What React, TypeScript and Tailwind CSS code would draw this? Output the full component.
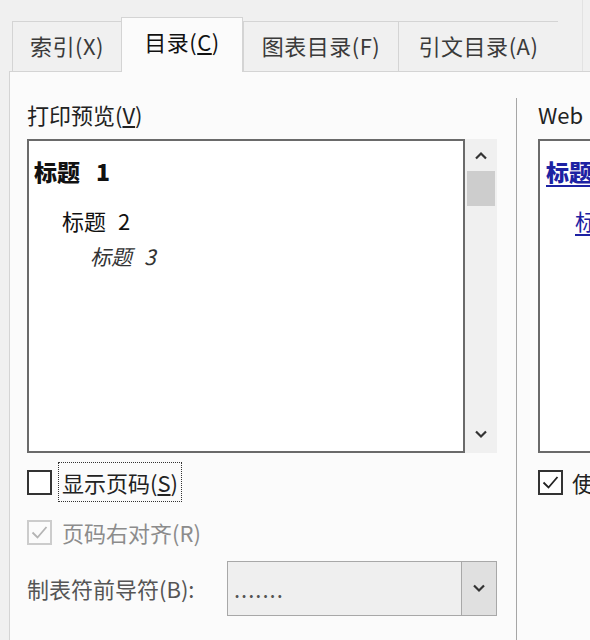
import React from 'react';

const Chevron = ({ up = false, className = '' }: { up?: boolean; className?: string }) => (
  <svg width="14" height="9" viewBox="0 0 14 9" className={className}>
    <polyline
      points={up ? '2,7.5 7,2.5 12,7.5' : '2,1.5 7,6.5 12,1.5'}
      fill="none"
      stroke="#333"
      strokeWidth="2.2"
    />
  </svg>
);

const Check = ({ color }: { color: string }) => (
  <svg width="21" height="21" viewBox="0 0 21 21">
    <polyline points="3.5,10.5 8.5,15.5 17.5,5" fill="none" stroke={color} strokeWidth="1.8" />
  </svg>
);

const tabs = [
  { label: '索引', key: 'X', w: 'w-[109px]' },
  { label: '目录', key: 'C', w: 'w-[122px]', active: true },
  { label: '图表目录', key: 'F', w: 'w-[155px]' },
  { label: '引文目录', key: 'A', w: 'w-[160px]' },
];

export default function App() {
  return (
    <div
      className="w-[590px] h-[640px] overflow-hidden bg-[#f0f0f0] flex flex-col text-[22px] text-[#222]"
      style={{ fontFamily: '"Noto Sans CJK SC", "Noto Sans", sans-serif' }}
    >
      {/* tab strip */}
      <div className="flex items-end pl-[12px] h-[71px] shrink-0">
        {tabs.map((t) =>
          t.active ? (
            <div
              key={t.key}
              className={`${t.w} h-[55px] -mb-px relative z-10 bg-[#fbfbfb] border-t border-x border-[#d4d4d4] flex items-center justify-center pb-[8px] text-[#111] tracking-[0.5px]`}
            >
              {t.label}(<span className="underline underline-offset-2">{t.key}</span>)
            </div>
          ) : (
            <div
              key={t.key}
              className={`${t.w} h-[50px] bg-[#f0f0f0] border-t border-l last:border-r border-[#d4d4d4] flex items-center justify-center pb-[3px] text-[#3a3a3a] tracking-[0.5px]`}
            >
              {t.label}({t.key})
            </div>
          )
        )}
        <div className="flex-1 h-[71px] border-r border-[#e2e2e2] mr-[7px]" />
      </div>

      {/* panel */}
      <div className="flex-1 ml-[9px] bg-[#fbfbfb] border-t border-l border-[#d4d4d4] flex">
        {/* left column */}
        <div className="ml-[17px] w-[470px] shrink-0 flex flex-col">
          <div className="mt-[27px] h-[30px] leading-[30px]">
            打印预览(<span className="underline underline-offset-2">V</span>)
          </div>
          <div className="mt-[10px] h-[314px] flex">
            <div className="w-[438px] border-2 border-[#6a6a6a] bg-white pl-[5px] pt-[15px]">
              <div className="h-[30px] leading-[30px] text-[23px] font-black text-[#111]">
                标题<span className="ml-[16px]">1</span>
              </div>
              <div className="mt-[19px] ml-[28px] h-[30px] leading-[30px] text-[22px] text-[#111]">
                标题<span className="ml-[12px]">2</span>
              </div>
              <div className="mt-[6px] ml-[56px] h-[30px] leading-[30px] text-[21px] italic text-[#333]">
                标题<span className="ml-[12px]">3</span>
              </div>
            </div>
            <div className="w-[32px] bg-[#f0f0f0] flex flex-col items-center">
              <div className="h-[32px] flex items-center justify-center">
                <Chevron up />
              </div>
              <div className="w-[28px] h-[35px] bg-[#cdcdcd]" />
              <div className="flex-1" />
              <div className="h-[38px] flex items-center justify-center">
                <Chevron />
              </div>
            </div>
          </div>

          <div className="mt-[9px] h-[40px] flex items-center">
            <div className="w-[25px] h-[25px] border-2 border-[#333] bg-white" />
            <div className="ml-[6px] h-[40px] px-[3px] flex items-center border border-dotted border-[#333]">
              显示页码(<span className="underline underline-offset-2">S</span>)
            </div>
          </div>

          <div className="mt-[15px] h-[30px] flex items-center text-[#8c8c8c]">
            <div className="w-[25px] h-[25px] border-2 border-[#cccccc] flex items-center justify-center">
              <Check color="#b4b4b4" />
            </div>
            <div className="ml-[10px] leading-[30px]">页码右对齐(R)</div>
          </div>

          <div className="mt-[14px] h-[55px] flex items-center">
            <div className="w-[200px] text-[#555]">制表符前导符(B):</div>
            <div className="w-[270px] h-[55px] border border-[#a8a8a8] bg-[#efefef] flex">
              <div className="flex-1 pl-[6px] flex items-center text-[#555] tracking-[1px]">.......</div>
              <div className="w-[35px] bg-[#e0e0e0] border-l border-[#a8a8a8] flex items-center justify-center">
                <Chevron />
              </div>
            </div>
          </div>
        </div>

        {/* separator */}
        <div className="ml-[19px] mt-[26px] w-px bg-[#a6a6a6] shrink-0" />

        {/* right column */}
        <div className="ml-[21px] w-[60px] shrink-0 flex flex-col">
          <div className="mt-[27px] h-[30px] leading-[30px]">Web</div>
          <div className="mt-[10px] h-[314px] w-[80px] border-2 border-[#6a6a6a] bg-white pl-[6px] pt-[15px]">
            <div className="h-[30px] leading-[30px] text-[23px] font-black text-[#1d22a3] underline underline-offset-4">
              标题
            </div>
            <div className="mt-[19px] ml-[29px] h-[30px] leading-[30px] text-[22px] text-[#1d22a3] underline underline-offset-4">
              标
            </div>
          </div>
          <div className="mt-[9px] h-[40px] flex items-center">
            <div className="w-[25px] h-[25px] border-2 border-[#333] bg-white flex items-center justify-center shrink-0">
              <Check color="#222" />
            </div>
            <div className="ml-[9px]">使</div>
          </div>
        </div>
      </div>
    </div>
  );
}
